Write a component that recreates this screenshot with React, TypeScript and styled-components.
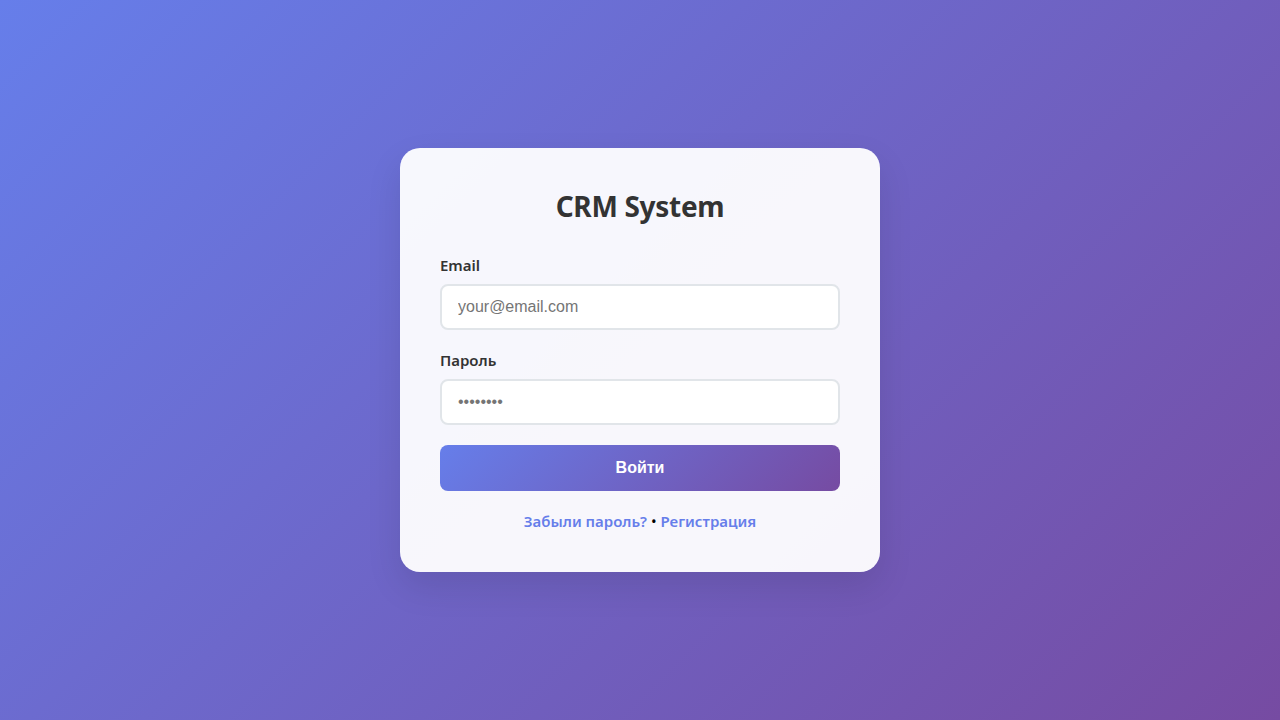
import { createGlobalStyle, styled } from "styled-components";

const GlobalStyle = createGlobalStyle`
  * {
    box-sizing: border-box;
  }

  body {
    margin: 0;
    font-family: "Noto Sans", "Open Sans", sans-serif;
  }
`;

const Page = styled.div`
  min-height: 100vh;
  display: flex;
  align-items: center;
  justify-content: center;
  background: linear-gradient(135deg, #667eea 0%, #764ba2 100%);
`;

const Card = styled.div`
  width: 480px;
  padding: 40px;
  border-radius: 20px;
  background: rgba(255, 255, 255, 0.95);
  box-shadow: 0 15px 35px rgba(0, 0, 0, 0.1);
`;

const Title = styled.h2`
  margin: 0 0 30px;
  text-align: center;
  font-size: 28px;
  line-height: 37px;
  font-weight: 700;
  letter-spacing: -0.3px;
  color: #333;
`;

const FormGroup = styled.div`
  margin-bottom: 20px;
`;

const Label = styled.label`
  display: block;
  margin-bottom: 8px;
  font-size: 15px;
  line-height: 21px;
  font-weight: 600;
  color: #333;
`;

const Input = styled.input`
  display: block;
  width: 100%;
  height: 46px;
  padding: 12px 16px;
  border: 2px solid #e1e5e9;
  border-radius: 8px;
  background: #fff;
  font-family: "Liberation Sans", Arial, sans-serif;
  font-size: 16px;
  color: #333;
  outline: none;

  &::placeholder {
    color: #757575;
  }
`;

const SubmitButton = styled.button`
  display: block;
  width: 100%;
  height: 46px;
  border: none;
  border-radius: 8px;
  background: linear-gradient(135deg, #667eea 0%, #764ba2 100%);
  color: #fff;
  font-family: "Liberation Sans", Arial, sans-serif;
  font-size: 16px;
  font-weight: 700;
  cursor: pointer;
`;

const Links = styled.div`
  margin-top: 20px;
  text-align: center;
  font-size: 15px;
  line-height: 21px;
  color: #000;
`;

const Link = styled.a`
  color: #667eea;
  font-weight: 600;
  text-decoration: none;
`;

export default function App() {
  return (
    <>
      <GlobalStyle />
      <Page>
        <Card>
          <Title>CRM System</Title>
          <form onSubmit={(e) => e.preventDefault()}>
            <FormGroup>
              <Label htmlFor="email">Email</Label>
              <Input id="email" type="email" placeholder="your@email.com" />
            </FormGroup>
            <FormGroup>
              <Label htmlFor="password">Пароль</Label>
              <Input id="password" type="password" placeholder="••••••••" />
            </FormGroup>
            <SubmitButton type="submit">Войти</SubmitButton>
          </form>
          <Links>
            <Link href="#">Забыли пароль?</Link> • <Link href="#">Регистрация</Link>
          </Links>
        </Card>
      </Page>
    </>
  );
}
